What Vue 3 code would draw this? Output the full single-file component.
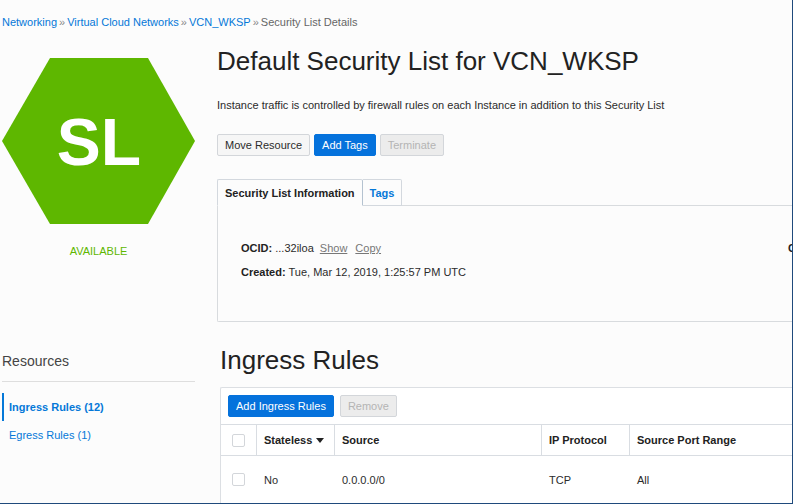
<script setup>
import { ref } from 'vue'

const crumbs = ['Networking', 'Virtual Cloud Networks', 'VCN_WKSP']
const resources = [
  { label: 'Ingress Rules (12)', active: true },
  { label: 'Egress Rules (1)', active: false },
]
const rules = ref([
  { stateless: 'No', source: '0.0.0.0/0', protocol: 'TCP', ports: 'All', selected: false },
])
const allSelected = ref(false)
</script>

<template>
  <div class="page">
    <nav class="crumbs" aria-label="Breadcrumb">
      <template v-for="crumb in crumbs" :key="crumb">
        <a href="#">{{ crumb }}</a><span class="sep">»</span>
      </template>
      <span>Security List Details</span>
    </nav>

    <div class="layout">
      <aside class="sidebar">
        <svg class="badge" viewBox="0 0 193 166">
          <polygon points="48,0 146,0 193,83 146,166 48,166 0,83" fill="#5eb700" />
          <text x="97" y="107" text-anchor="middle" class="badge-text">SL</text>
        </svg>
        <p class="status">AVAILABLE</p>
        <h2 class="side-title">Resources</h2>
        <ul class="side-list">
          <li v-for="item in resources" :key="item.label">
            <a href="#" :class="{ active: item.active }">{{ item.label }}</a>
          </li>
        </ul>
      </aside>

      <main class="main">
        <h1 class="title">Default Security List for VCN_WKSP</h1>
        <p class="intro">Instance traffic is controlled by firewall rules on each Instance in addition to this Security List</p>
        <div class="actions">
          <button type="button" class="btn">Move Resource</button>
          <button type="button" class="btn primary">Add Tags</button>
          <button type="button" class="btn" disabled>Terminate</button>
        </div>

        <div class="tabs" role="tablist">
          <button type="button" role="tab" class="tab current" aria-selected="true">Security List Information</button>
          <button type="button" role="tab" class="tab" aria-selected="false">Tags</button>
        </div>
        <section class="panel">
          <div class="facts">
            <p><b>OCID:</b> ...32iloa <a href="#" class="inline-link">Show</a><a href="#" class="inline-link">Copy</a></p>
            <p><b>Created:</b> Tue, Mar 12, 2019, 1:25:57 PM UTC</p>
          </div>
          <div class="facts"><p><b>C</b></p></div>
        </section>

        <section class="rules">
          <h2 class="title">Ingress Rules</h2>
          <div class="table-box">
            <div class="toolbar">
              <button type="button" class="btn primary">Add Ingress Rules</button>
              <button type="button" class="btn" disabled>Remove</button>
            </div>
            <table>
              <colgroup>
                <col class="c-check" /><col class="c-state" /><col class="c-source" /><col class="c-proto" /><col />
              </colgroup>
              <thead>
                <tr>
                  <th><input v-model="allSelected" type="checkbox" aria-label="Select all rules" /></th>
                  <th>
                    <span class="sort">Stateless
                      <svg width="8" height="5" viewBox="0 0 8 5"><path d="M0 0H8L4 5Z" fill="#222" /></svg>
                    </span>
                  </th>
                  <th>Source</th>
                  <th>IP Protocol</th>
                  <th>Source Port Range</th>
                </tr>
              </thead>
              <tbody>
                <tr v-for="(rule, i) in rules" :key="i">
                  <td><input v-model="rule.selected" type="checkbox" aria-label="Select rule" /></td>
                  <td>{{ rule.stateless }}</td>
                  <td>{{ rule.source }}</td>
                  <td>{{ rule.protocol }}</td>
                  <td>{{ rule.ports }}</td>
                </tr>
              </tbody>
            </table>
          </div>
        </section>
      </main>
    </div>
  </div>
</template>

<style>
body {
  margin: 0;
  background: #fcfcfc;
}
</style>

<style scoped>
* {
  box-sizing: border-box;
}
.page {
  height: 100vh;
  overflow: hidden;
  padding: 15px 0 0 2px;
  border-right: 1px solid #1f4a7c;
  border-bottom: 1px solid #1f4a7c;
  font-family: "Liberation Sans", Arial, sans-serif;
  font-size: 11px;
  line-height: 14px;
  color: #2b2b2b;
}
p, h1, h2, ul {
  margin: 0;
  padding: 0;
}
a {
  color: #0578d8;
  text-decoration: none;
}
.crumbs {
  display: flex;
  gap: 2px;
  color: #666;
}
.sep {
  color: #888;
}
.layout {
  display: grid;
  grid-template-columns: 193px minmax(0, 1fr);
  column-gap: 22px;
  padding-top: 15px;
}
.badge {
  display: block;
  width: 100%;
  margin-top: 14px;
}
.badge-text {
  font-size: 66px;
  font-weight: bold;
  fill: #fff;
}
.status {
  margin-top: 20px;
  text-align: center;
  color: #5eb700;
}
.side-title {
  margin-top: 93px;
  padding-bottom: 10px;
  border-bottom: 1px solid #dedede;
  font-size: 14px;
  line-height: 20px;
  font-weight: normal;
  color: #444;
}
.side-list {
  list-style: none;
  margin-top: 11px;
}
.side-list a {
  display: block;
  padding: 7px 0 7px 7px;
}
.side-list a.active {
  padding-left: 5px;
  border-left: 2px solid #0578d8;
  font-weight: bold;
}
.title {
  font-size: 26px;
  line-height: 34px;
  font-weight: normal;
  color: #222;
}
.intro {
  margin-top: 20px;
}
.actions {
  display: flex;
  gap: 4px;
  margin-top: 22px;
}
.btn {
  height: 22px;
  padding: 0 7px;
  border: 1px solid #d3d6da;
  border-radius: 2px;
  background: #f6f6f6;
  font: inherit;
  color: #2b2b2b;
}
.btn.primary {
  border-color: #0572dc;
  background: #0572dc;
  color: #fff;
}
.btn:disabled {
  background: #ececec;
  color: #b4b4b4;
}
.tabs {
  display: flex;
  margin-top: 23px;
}
.tab {
  height: 27px;
  padding: 0 7px;
  border: 1px solid #d3d8de;
  border-left: 0;
  border-radius: 0 2px 0 0;
  background: #fcfcfc;
  font: inherit;
  font-weight: bold;
  color: #0578d8;
}
.tab.current {
  border-left: 1px solid #d3d8de;
  border-right-color: #b4c2d0;
  border-bottom-color: #fcfcfc;
  border-radius: 2px 2px 0 0;
  color: #222;
  position: relative;
  z-index: 1;
}
.panel {
  display: grid;
  grid-template-columns: 547px auto;
  margin-top: -1px;
  height: 117px;
  padding: 35px 0 0 23px;
  border: 1px solid #d8dbde;
  border-right: 0;
  border-radius: 0 0 0 2px;
}
.facts {
  display: flex;
  flex-direction: column;
  gap: 10px;
}
.facts b {
  color: #222;
}
.inline-link {
  margin-left: 3px;
  color: #777;
  text-decoration: underline;
}
.inline-link + .inline-link {
  margin-left: 8px;
}
.rules {
  margin-top: 21px;
  padding-left: 3px;
}
.table-box {
  margin-top: 10px;
  border: 1px solid #dcdfe3;
  border-right: 0;
  border-radius: 2px 0 0 0;
  background: #fff;
}
.toolbar {
  display: flex;
  gap: 6px;
  padding: 7px;
}
table {
  width: 100%;
  table-layout: fixed;
  border-collapse: separate;
  border-spacing: 0;
}
.c-check { width: 36px; }
.c-state { width: 78px; }
.c-source { width: 207px; }
.c-proto { width: 88px; }
th, td {
  padding: 0 7px;
  text-align: left;
}
th {
  height: 32px;
  border: solid #d9dde2;
  border-width: 1px 1px 1px 0;
  color: #222;
}
th:last-child {
  border-right: 0;
}
td {
  height: 47px;
}
th:first-child, td:first-child {
  padding: 0 0 0 11px;
}
.sort {
  display: flex;
  align-items: center;
  gap: 4px;
}
input {
  display: block;
  appearance: none;
  width: 13px;
  height: 13px;
  margin: 0;
  border: 1px solid #d3d6da;
  border-radius: 2px;
  background: #fff;
}
input:checked {
  background: #0572dc;
}
</style>
